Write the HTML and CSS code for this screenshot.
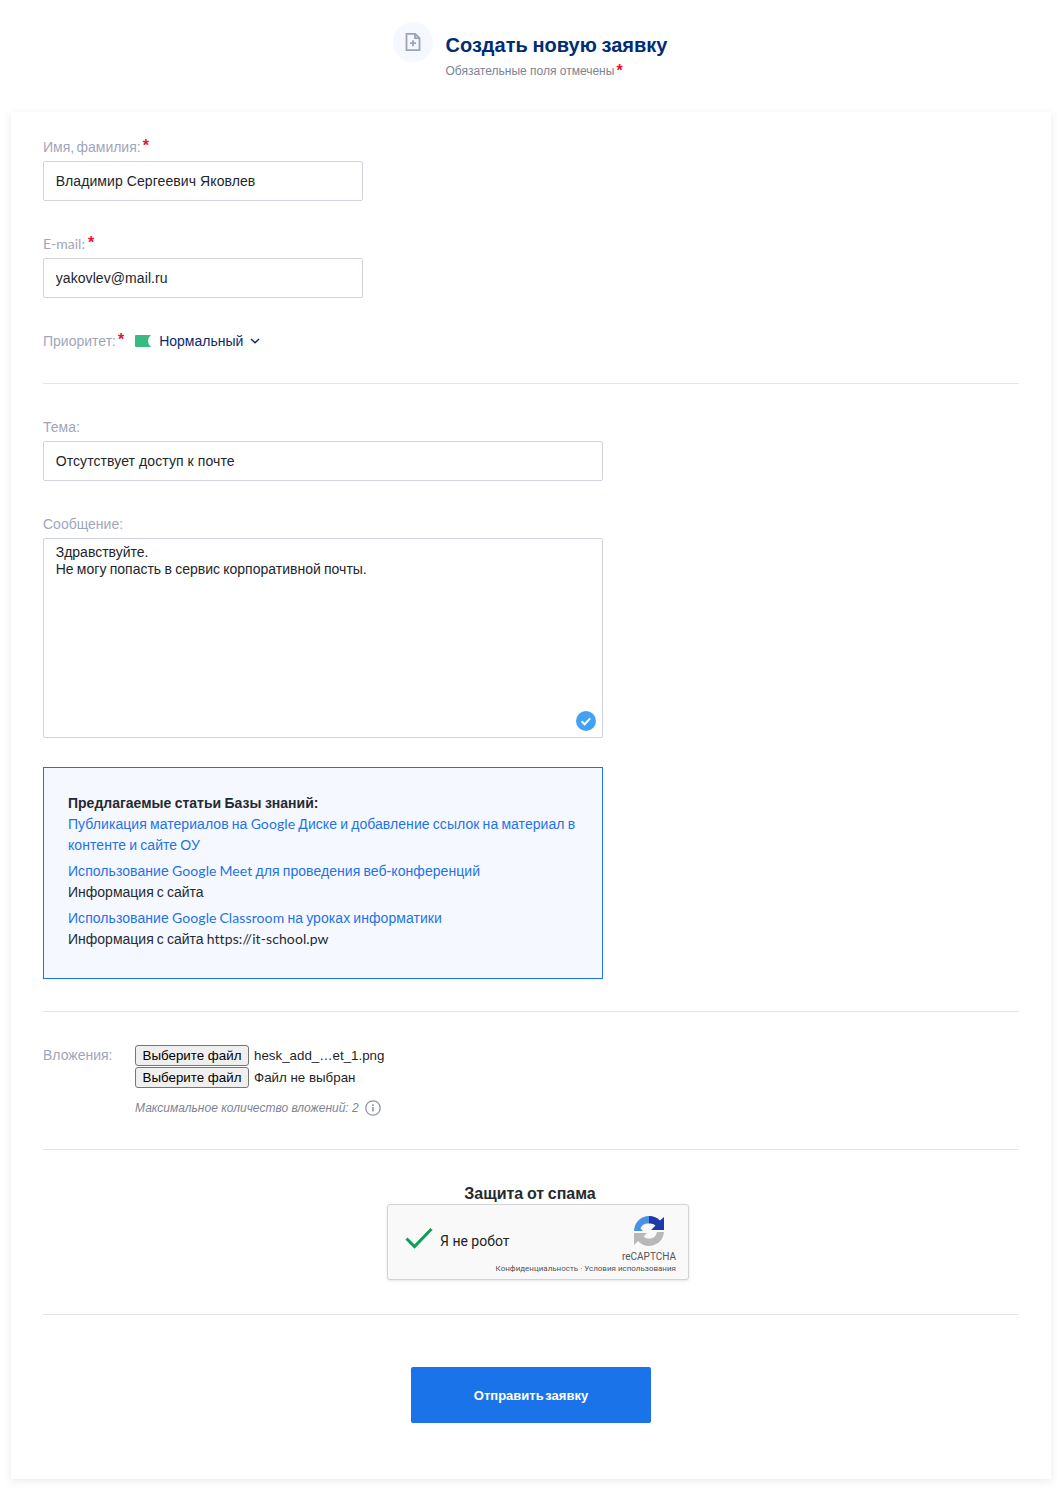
FILE: index.html
```html
<!DOCTYPE html>
<html lang="ru">
<head>
<meta charset="utf-8">
<title>Создать новую заявку</title>
<link rel="stylesheet" href="styles.css">
</head>
<body>
<header class="head">
  <div class="head-icon">
    <svg width="20" height="20" viewBox="0 0 20 20" fill="none" stroke="#9ba3bd" stroke-width="1.8"><path d="M3.500 1.800h8.700l4.300 4.300v12.100h-13z"/><path d="M12 1.800v4.400h4.500"/><path d="M10 8.200v6M7 11.200h6"/></svg>
  </div>
  <div class="head-text">
    <h1>Создать новую заявку</h1>
    <p>Обязательные поля отмечены<span class="req">*</span></p>
  </div>
</header>
<form class="card">
  <label class="label">Имя, фамилия:<span class="req">*</span></label>
  <input class="field short" type="text" value="Владимир Сергеевич Яковлев">
  <label class="label second"><span class="latin">E-mail:</span><span class="req">*</span></label>
  <input class="field short" type="text" value="yakovlev@mail.ru">
  <div class="priority">
    <span class="label-inline">Приоритет:<span class="req">*</span></span>
    <svg class="flag" width="16" height="12" viewBox="0 0 16 12"><path d="M1 0h15q-3 2.500-3 6t3 6H1q-1 0-1-1V1q0-1 1-1z" fill="#38bb80"/></svg>
    <span class="pri-value">Нормальный</span>
    <svg class="chev" width="10" height="6" viewBox="0 0 10 6" fill="none" stroke="#0b2a6b" stroke-width="1.400"><path d="M1 1l4 3.700L9 1"/></svg>
  </div>
  <hr class="rule">
  <label class="label topic">Тема:</label>
  <input class="field wide" type="text" value="Отсутствует доступ к почте">
  <label class="label second">Сообщение:</label>
  <div class="msg-wrap">
    <textarea class="field area">Здравствуйте.
Не могу попасть в сервис корпоративной почты.</textarea>
    <svg class="msg-check" width="20" height="20" viewBox="0 0 20 20"><circle cx="10" cy="10" r="10" fill="#42a1f5"/><path d="M5.600 10.200l3 3 5.600-5.800" fill="none" stroke="#fff" stroke-width="2"/></svg>
  </div>
  <section class="kb">
    <p class="kb-title">Предлагаемые статьи Базы знаний:</p>
    <div class="kb-item"><a class="kb-link">Публикация материалов на <span class="latin">Google</span> Диске и добавление ссылок на материал в контенте и сайте ОУ</a></div>
    <div class="kb-item"><a class="kb-link">Использование <span class="latin">Google Meet</span> для проведения веб-конференций</a><br>Информация с сайта</div>
    <div class="kb-item"><a class="kb-link">Использование <span class="latin">Google Classroom</span> на уроках информатики</a><br>Информация с сайта <span class="latin">https://it-school.pw</span></div>
  </section>
  <hr class="rule after-kb">
  <div class="attach">
    <span class="label-inline attach-label">Вложения:</span>
    <div class="files">
      <div class="file-row"><button class="file-btn" type="button">Выберите файл</button><span>hesk_add_…et_1.png</span></div>
      <div class="file-row"><button class="file-btn" type="button">Выберите файл</button><span>Файл не выбран</span></div>
      <div class="hint">Максимальное количество вложений: 2
        <svg width="16" height="16" viewBox="0 0 16 16" fill="none" stroke="#8d95a8" stroke-width="1.300"><circle cx="8" cy="8" r="7.200"/><path d="M8 7v4.600" stroke-width="1.600"/><path d="M8 4.200v1.700" stroke-width="1.600"/></svg>
      </div>
    </div>
  </div>
  <hr class="rule after-attach">
  <h2 class="spam">Защита от спама</h2>
  <div class="captcha">
    <svg class="cap-check" width="28" height="22" viewBox="0 0 28 22" fill="none" stroke="#0f9d58" stroke-width="3"><path d="M1.500 11.500l8 8L26.500 2"/></svg>
    <span class="cap-text">Я не робот</span>
    <div class="cap-brand">
      <svg width="32" height="32" viewBox="0 0 32 32">
        <path d="M1 18V30L5 26A15 15 0 0 0 31 17H24A8 8 0 0 1 10.500 21.500L14 18Z" fill="#b8b8b8"/>
        <path d="M16 1A15 15 0 0 0 1.200 14L1 16H10L7.500 13.500A8 8 0 0 1 16 8.500Z" fill="#4a90e8"/>
        <path d="M16 1A15 15 0 0 1 27 5.500L31 2V15H18L22.500 10.500A8 8 0 0 0 16 8.500Z" fill="#1c3aa9"/>
      </svg>
      <span>reCAPTCHA</span>
    </div>
    <small class="cap-links">Конфиденциальность · Условия использования</small>
  </div>
  <hr class="rule after-captcha">
  <div class="submit-row"><button class="submit" type="button">Отправить заявку</button></div>
</form>
</body>
</html>
```
FILE: styles.css
```css
* { box-sizing: border-box; }
html, body { margin: 0; padding: 0; }
body {
  background: #fff;
  height: 1494px;
  overflow: hidden;
  font-family: "Liberation Sans", Arial, sans-serif;
  font-size: 14px;
  word-spacing: -0.8px;
  color: #262a30;
}
.latin { font-family: Lato, sans-serif; line-height: 1; }
.head {
  height: 112px;
  padding: 22px 2px 0 0;
  display: flex;
  justify-content: center;
  gap: 13px;
}
.head-icon {
  width: 40px;
  height: 40px;
  border-radius: 50%;
  background: #f5f8ff;
  display: flex;
  align-items: center;
  justify-content: center;
}
.head-text h1 {
  margin: 10px 0 0;
  font-size: 20px;
  line-height: 26px;
  font-weight: 700;
  color: #002d73;
}
.head-text p {
  margin: 5px 0 0;
  font-size: 12px;
  line-height: 16px;
  color: #7d8494;
  word-spacing: 0;
}
.req { color: #e8132c; font-size: 16px; font-weight: 700; margin-left: 2px; line-height: 0; position: relative; top: -1px; }
.head-text .req { top: 1px; margin-left: 2px; }
.latin + .req { margin-left: 3px; }
.card {
  margin: 0 11px;
  width: 1040px;
  height: 1367px;
  padding: 25px 32px 0;
  background: #fff;
  box-shadow: 0 2px 8px rgba(70, 80, 110, 0.12);
  display: flow-root;
}
.label, .label-inline {
  color: #9fa6bb;
  font-size: 14px;
  line-height: 20px;
  word-spacing: -1.6px;
}
.label { display: block; margin-bottom: 4px; }
.label.second { margin-top: 33px; }
.label.topic { margin-top: 33px; }
.field {
  display: block;
  height: 40px;
  border: 1px solid #d1d2e4;
  border-radius: 2px;
  padding: 0 11.700px;
  font: 14px/16px "Liberation Sans", Arial, sans-serif;
  letter-spacing: 0.08px;
  word-spacing: 0;
  color: #22252b;
  background: #fff;
  outline: none;
}
.short { width: 320px; }
.wide { width: 560px; }
.msg-wrap { position: relative; width: 560px; height: 200px; }
.area { width: 100%; height: 200px; padding: 5px 11.700px; line-height: 17px; letter-spacing: 0; word-spacing: -0.6px; resize: none; overflow: hidden; }
.msg-check { position: absolute; right: 7px; bottom: 7px; }
.priority {
  display: flex;
  align-items: center;
  height: 20px;
  margin-top: 33px;
}
.flag { margin-left: 11px; }
.pri-value { color: #0b2a6b; margin-left: 8px; word-spacing: 0; }
.chev { margin-left: 7px; }
.rule { border: 0; border-top: 1px solid #e3e4ea; margin: 32px 0 0; }
.kb {
  margin-top: 29px;
  width: 560px;
  height: 212px;
  padding: 25px 24px 0;
  background: #f5f8ff;
  border: 1px solid #1a73e8;
  line-height: 21px;
}
.kb-title { margin: 0; font-weight: 700; word-spacing: -0.5px; }
.kb-item { margin-bottom: 5px; }
.kb-link { color: #1f73e8; letter-spacing: 0.06px; }
.kb .latin { letter-spacing: 0.1px; }
.rule.after-kb { margin-top: 32px; }
.attach { display: flex; margin-top: 32px; }
.attach-label { width: 92px; line-height: 22px; }
.file-row { display: flex; align-items: center; height: 22px; gap: 5px; font-size: 13.330px; word-spacing: 0; color: #1f1f1f; }
.file-btn {
  width: 114px;
  height: 21px;
  padding: 1px 6px;
  font: 13.330px "Liberation Sans", Arial, sans-serif;
  color: #000;
  background: #efefef;
  border: 1px solid #767676;
  border-radius: 3px;
}
.hint {
  margin-top: 12px;
  display: flex;
  align-items: center;
  gap: 6px;
  height: 16px;
  font-size: 12px;
  font-style: italic;
  word-spacing: 0;
  color: #7d8494;
}
.rule.after-attach { margin-top: 33px; }
.spam {
  margin: 34px 0 0;
  padding-right: 2px;
  text-align: center;
  font-size: 16px;
  line-height: 20px;
  font-weight: 700;
  color: #262a30;
}
.captcha {
  position: relative;
  left: 7px;
  margin: 0 auto;
  width: 302px;
  height: 76px;
  background: #f9f9f9;
  border: 1px solid #d3d3d3;
  border-radius: 3px;
  box-shadow: 0 1px 3px rgba(0, 0, 0, 0.1);
  display: flex;
  align-items: center;
  padding: 0 12px 0 17px;
  word-spacing: 0;
}
.cap-check { flex: none; margin-bottom: 8px; }
.cap-text { margin: 0 0 2px 7px; font: 14px Roboto, sans-serif; color: #222; }
.cap-brand {
  position: absolute;
  right: 12px;
  top: 10px;
  display: flex;
  flex-direction: column;
  align-items: center;
  font: 10px Roboto, sans-serif;
  color: #555;
  gap: 4px;
}
.cap-links {
  position: absolute;
  right: 12px;
  bottom: 6px;
  font: 8px Roboto, sans-serif;
  color: #555;
}
.rule.after-captcha { margin-top: 34px; }
.submit-row { display: flex; justify-content: center; margin-top: 52px; }
.submit {
  width: 240px;
  height: 56px;
  background: #1a73e8;
  color: #fff;
  border: 0;
  border-radius: 2px;
  font: 700 13px "Liberation Sans", Arial, sans-serif;
  word-spacing: -2px;
}
```
